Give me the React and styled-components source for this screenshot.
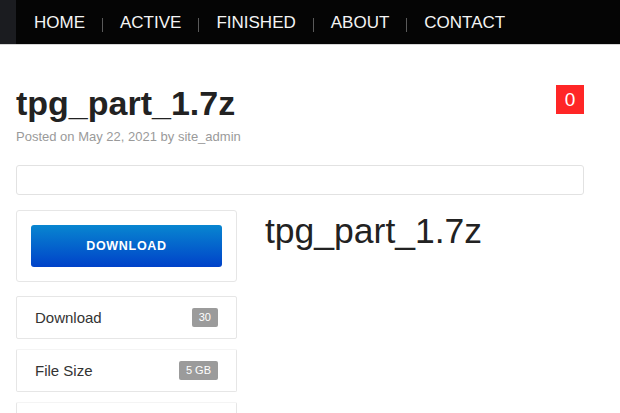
import React from 'react';
import styled, { createGlobalStyle } from 'styled-components';

const GlobalStyle = createGlobalStyle`
  body {
    margin: 0;
    background: #fff;
    font-family: "Liberation Sans", Arial, Helvetica, sans-serif;
  }
`;

const NavBar = styled.nav`
  display: flex;
  height: 44px;
  padding-left: 16px;
  background: #1b1c20;
  border-bottom: 1px solid #d6d6d6;
`;

const NavInner = styled.ul`
  flex: 1;
  display: flex;
  align-items: center;
  margin: 0;
  padding: 2px 0 0 1px;
  list-style: none;
  background: #050505;
`;

const NavLink = styled.li`
  padding: 0 17px;
  color: #f4f4f4;
  font-size: 17px;
  line-height: 42px;
`;

const NavSep = styled.li`
  width: 1px;
  height: 14px;
  margin-top: 3px;
  background: #5a5a5a;
`;

const Page = styled.main`
  padding: 38px 36px 0 16px;
`;

const Header = styled.header`
  display: flex;
  justify-content: space-between;
  align-items: flex-start;
`;

const Title = styled.h1`
  margin: 0;
  font-size: 34px;
  line-height: 40px;
  font-weight: 700;
  color: #222;
`;

const Meta = styled.div`
  margin-top: 5px;
  font-size: 13px;
  line-height: 18px;
  color: #9a9a9a;
`;

const Counter = styled.span`
  display: flex;
  align-items: center;
  justify-content: center;
  width: 28px;
  height: 29px;
  margin-top: 2px;
  background: #ff2626;
  color: #fff;
  font-size: 19px;
`;

const SearchBox = styled.div`
  height: 28px;
  margin-top: 19px;
  border: 1px solid #e2e2e2;
  border-radius: 3px;
`;

const Main = styled.section`
  display: flex;
  gap: 28px;
  margin-top: 15px;
  align-items: flex-start;
`;

const Sidebar = styled.aside`
  width: 221px;
  flex-shrink: 0;
  display: flex;
  flex-direction: column;
`;

const ButtonCard = styled.div`
  padding: 14px;
  border: 1px solid #e6e6e6;
  border-radius: 3px;
`;

const DownloadButton = styled.button`
  display: block;
  width: 100%;
  height: 42px;
  border: 0;
  border-radius: 3px;
  background: linear-gradient(#0886d0, #0042c9);
  color: #fff;
  font-family: "Liberation Sans", Arial, sans-serif;
  font-size: 12.5px;
  font-weight: 700;
  letter-spacing: 0.7px;
`;

const InfoList = styled.ul`
  margin: 14px 0 0;
  padding: 0;
  list-style: none;
  display: flex;
  flex-direction: column;
  gap: 10px;
`;

const InfoRow = styled.li`
  display: flex;
  align-items: center;
  justify-content: space-between;
  height: 41px;
  padding: 0 18px;
  border: 1px solid #e6e6e6;
  border-top-color: ${p => (p.$first ? '#e6e6e6' : '#f4f4f4')};
  border-radius: 2px;
  font-size: 15px;
  color: #333;
`;

const Pill = styled.span`
  height: 19px;
  padding: 0 7px;
  line-height: 19px;
  border-radius: 2px;
  background: #9b9b9b;
  color: #fff;
  font-size: 11px;
`;

const FileName = styled.h2`
  margin: 0;
  font-size: 35.5px;
  line-height: 42px;
  font-weight: 400;
  color: #222;
`;

const links = ['HOME', 'ACTIVE', 'FINISHED', 'ABOUT', 'CONTACT'];

const info = [
  { label: 'Download', value: '30' },
  { label: 'File Size', value: '5 GB' },
  { label: '', value: '' },
];

const App = () => (
  <>
    <GlobalStyle />
    <NavBar>
      <NavInner>
        {links.map((l, i) => (
          <React.Fragment key={l}>
            {i > 0 && <NavSep />}
            <NavLink>{l}</NavLink>
          </React.Fragment>
        ))}
      </NavInner>
    </NavBar>
    <Page>
      <Header>
        <div>
          <Title>tpg_part_1.7z</Title>
          <Meta>Posted on May 22, 2021 by site_admin</Meta>
        </div>
        <Counter>0</Counter>
      </Header>
      <SearchBox />
      <Main>
        <Sidebar>
          <ButtonCard>
            <DownloadButton type="button">DOWNLOAD</DownloadButton>
          </ButtonCard>
          <InfoList>
            {info.map((row, i) => (
              <InfoRow key={i} $first={i === 0}>
                <span>{row.label}</span>
                {row.value && <Pill>{row.value}</Pill>}
              </InfoRow>
            ))}
          </InfoList>
        </Sidebar>
        <FileName>tpg_part_1.7z</FileName>
      </Main>
    </Page>
  </>
);

export default App;
